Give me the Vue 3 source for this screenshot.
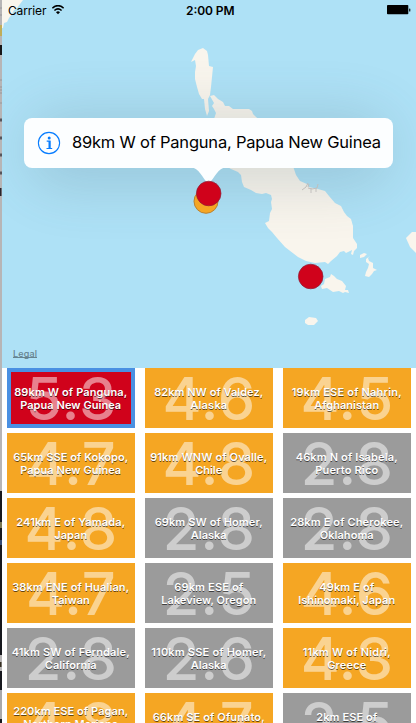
<script setup>
const quakes = [
  { mag: '5.3', lines: ['89km W of Panguna,', 'Papua New Guinea'], level: 'severe', w: [113, 101] },
  { mag: '4.6', lines: ['82km NW of Valdez,', 'Alaska'], level: 'strong', w: [109, 37] },
  { mag: '4.5', lines: ['19km ESE of Nahrin,', 'Afghanistan'], level: 'strong', w: [110, 65] },
  { mag: '4.7', lines: ['65km SSE of Kokopo,', 'Papua New Guinea'], level: 'strong', w: [115, 101] },
  { mag: '4.8', lines: ['91km WNW of Ovalle,', 'Chile'], level: 'strong', w: [117, 27] },
  { mag: '2.8', lines: ['46km N of Isabela,', 'Puerto Rico'], level: 'minor', w: [102, 63] },
  { mag: '4.8', lines: ['241km E of Yamada,', 'Japan'], level: 'strong', w: [109, 33] },
  { mag: '2.8', lines: ['69km SW of Homer,', 'Alaska'], level: 'minor', w: [108, 36] },
  { mag: '2.8', lines: ['28km E of Cherokee,', 'Oklahoma'], level: 'minor', w: [113, 54] },
  { mag: '4.7', lines: ['38km ENE of Hualian,', 'Taiwan'], level: 'strong', w: [117, 38] },
  { mag: '2.5', lines: ['69km ESE of', 'Lakeview, Oregon'], level: 'minor', w: [69, 95] },
  { mag: '4.6', lines: ['49km E of', 'Ishinomaki, Japan'], level: 'strong', w: [55, 97] },
  { mag: '2.8', lines: ['41km SW of Ferndale,', 'California'], level: 'minor', w: [118, 52] },
  { mag: '2.6', lines: ['110km SSE of Homer,', 'Alaska'], level: 'minor', w: [115, 36] },
  { mag: '4.3', lines: ['11km W of Nidri,', 'Greece'], level: 'strong', w: [88, 39] },
  { mag: '4.8', lines: ['220km ESE of Pagan,', 'Northern Mariana', 'Islands'], level: 'strong', w: [115, 95, 40] },
  { mag: '4.7', lines: ['66km SE of Ofunato,', 'Japan'], level: 'strong', w: [112, 33] },
  { mag: '2.5', lines: ['2km ESE of', 'Cloverdale, California'], level: 'minor', w: [61, 118] },
]
</script>

<template>
  <div class="screen">
    <svg class="edge" viewBox="0 0 2 723" aria-hidden="true">
      <rect width="2" height="723" fill="#b7b5b6" />
      <rect y="25" width="2" height="11" fill="#c0ac58" />
      <rect y="45" width="2" height="10" fill="#171719" />
      <path d="M0 8h2M0 15h2M0 80h2M0 87h2M0 90h2M0 93h2M0 103h2" stroke="#98979a" />
      <path d="M0 120h2M0 138h2M0 155h2M0 173h2" stroke="#57545a" stroke-width="3" />
      <rect y="188" width="1.5" height="8" fill="#29252d" />
      <rect y="491" width="2" height="232" fill="#17181e" />
      <rect y="522" width="2" height="6" fill="#777653" />
      <rect y="540" width="2" height="5" fill="#344b75" />
      <rect y="655" width="2" height="16" fill="#b7b5b6" />
      <rect y="662" width="1.5" height="5" fill="#373022" />
      <rect y="690" width="2" height="29" fill="#a9a9ab" />
    </svg>
    <main class="phone">
      <section class="map">
        <svg class="terrain" viewBox="2 0 414 368" aria-hidden="true">
          <g fill="#f9f5ed">
            <path d="M2 0H23L20 4 17 8 14 10 12 14 9 18 7 22 4 23 3 28H2Z" />
            <path d="M191 62L195 54 198 50 203 48 207 51 208 55 209 66 213 67 212 77 211 87 210 95 208 99 209 111 207 116 205 109 204 99 202 99 199 94 197 87 195 79 195 72 196 66 195 60Z" />
            <path d="M210 96L214 95 218 99 223 102 225 106 229 106 233 109 249 109 252 111 253 114 256 117 269 127 278 140 287 153 294 169 296 175 300 181 307 184 309 187 318 189 325 191 329 196 335 203 341 206 344 212 347 216 351 219 353 226 353 238 357 244 357 248 354 251 353 255 351 254 352 250 346 253 344 251 340 252 337 256 331 261 328 264 325 262 315 263 306 261 298 257 285 247 277 238 272 232 268 228 265 223 269 221 270 213 272 209 271 202 272 199 271 195 266 193 262 194 256 193 251 190 244 187 242 182 241 175 238 172 231 169 222 164 215 155 210 142 210 130 214 119 216 113 214 109 212 106 214 103Z" />
            <path d="M331 274L334 276 337 279 342 281 346 286 345 290 348 290 349 293 345 292 343 293 339 291 333 292 327 288 322 289 321 286 324 284 325 279 330 277Z" />
            <path d="M305 320L309 317 316 318 318 321 314 325 308 325 305 323Z" />
            <path d="M360 255L364 253 367 254 364 257 360 258Z" />
            <path d="M370 256L366 259 366 262 369 264 368 268 366 272 365 276 369 277 372 274 374 271 377 270 373 268 373 263 369 261 368 258Z" />
            <path d="M416 232L412 232 406 238 410 247 416 253Z" />
          </g>
          <g fill="none" stroke="#cec9c5" stroke-width="1">
            <path d="M302 190L306 187 308 183M308 188L312 189 317 188 318 184M311 188V193M316 188V192M308 187L309 184" />
          </g>
        </svg>

        <header class="status">
          <span class="carrier"><svg width="40" height="16"><text x="0" y="12" textLength="38.5" lengthAdjust="spacing">Carrier</text></svg>
            <svg class="wifi" width="12" height="10" viewBox="0 0 12 10">
              <path d="M.3 3.200Q6-1.900 11.700 3.200M2.400 5.500Q6 2.200 9.600 5.500" fill="none" stroke="#000" stroke-width="1.600" />
              <path d="M4 7.200Q6 5.400 8 7.200L6 9.300Z" />
            </svg>
          </span>
          <svg class="battery" width="24" height="11" viewBox="0 0 24 11">
            <rect x="0" y="0" width="21.300" height="9.300" rx=".8" />
            <rect x="22.200" y="3.500" width="1.100" height="3" rx=".5" />
          </svg>
          <span class="time"><svg width="50" height="16"><text x="0" y="12" textLength="48.5" lengthAdjust="spacing">2:00 PM</text></svg></span>
        </header>

        <div class="halo"></div>
        <svg class="pins" viewBox="2 0 414 368">
          <circle cx="206" cy="201.300" r="12" fill="#f5a623" stroke="#b98131" />
          <path d="M190 167C200 168 202 178 208.500 184C215 178 217 168 227 167Z" fill="#fcfeff" />
          <circle cx="208.700" cy="193.500" r="12.300" fill="#d0021b" stroke="#8d1f38" stroke-width=".7" />
          <circle cx="310.700" cy="276.500" r="12.300" fill="#d0021b" stroke="#8d1f38" stroke-width=".7" />
        </svg>
        <div class="callout">
          <svg class="info" width="24" height="24" viewBox="0 0 24 24">
            <circle cx="12" cy="12" r="10.600" fill="none" stroke="#087dff" stroke-width="1.100" />
            <circle cx="12.200" cy="6.900" r="1.500" fill="#087dff" />
            <path d="M9.700 10.200H13V17.200M9.500 17.500H15.200" fill="none" stroke="#087dff" stroke-width="1.200" />
            <path d="M12.400 10V17.300" stroke="#087dff" stroke-width="1.800" />
          </svg>
          <svg class="title" width="312" height="26"><text x="0" y="18" textLength="309" lengthAdjust="spacing">89km W of Panguna, Papua New Guinea</text></svg>
        </div>
        <svg class="legal" width="28" height="13"><text x="0" y="9" textLength="24" lengthAdjust="spacing">Legal</text><path d="M0 9.500H24" stroke="#66838f" /></svg>
      </section>

      <section class="grid">
        <article v-for="(q, i) in quakes" :key="i" class="cell" :class="[q.level, { selected: i === 0 }]">
          <svg class="mag" width="128" height="60"><text x="64.3" y="51.500" text-anchor="middle">{{ q.mag }}</text></svg>
          <div class="place">
            <svg v-for="(line, n) in q.lines" :key="n" class="line" width="128" height="13">
              <text :x="63.7 - q.w[n] / 2" y="10.500" :textLength="q.w[n]" lengthAdjust="spacing">{{ line }}</text>
            </svg>
          </div>
        </article>
      </section>
    </main>
  </div>
</template>

<style>
body { margin: 0; overflow: hidden; }
</style>

<style scoped>
.screen { display: flex; width: 416px; height: 723px; overflow: hidden; background: #fff; font-family: Inter, "Liberation Sans", sans-serif; }
.screen svg { display: block; flex: none; }
.edge { width: 2px; height: 723px; }
.phone { width: 414px; height: 723px; overflow: hidden; }
.map { position: relative; height: 368px; background: #aee1f6; overflow: hidden; }
.terrain, .pins { position: absolute; inset: 0; width: 414px; height: 368px; }
.status { position: relative; display: flex; justify-content: space-between; box-sizing: border-box; height: 20px; padding: 3px 5px 0 6px; font-size: 12px; }
.carrier { display: flex; gap: 4px; }
.wifi { margin-top: 2px; }
.battery { margin-top: 2px; }
.time { position: absolute; left: 184px; top: 3px; font-weight: 600; }
.time text { font-size: 12px; }
.halo { position: absolute; left: 42px; top: 128px; width: 330px; height: 38px; border-radius: 20px; box-shadow: 0 3px 54px 18px rgba(70, 95, 105, .19); }
.callout { position: absolute; left: 22px; top: 118px; display: flex; align-items: center; box-sizing: border-box; width: 369px; height: 50px; padding-left: 13px; gap: 10.500px; border-radius: 8px; background: #fcfeff; }
.title text { font-size: 16.500px; }
.legal { position: absolute; left: 11px; top: 348px; }
.legal text { font-size: 9px; fill: #66838f; font-weight: 500; }
.grid { display: grid; grid-template-columns: repeat(3, 128px); grid-auto-rows: 60px; gap: 5px 10px; padding-left: 5px; }
.cell { display: grid; place-items: center; width: 128px; height: 60px; }
.cell > * { grid-area: 1 / 1; }
.severe { background: #d0021b; }
.strong { background: #f5a623; }
.minor { background: #9b9b9b; }
.selected { box-shadow: inset 0 0 0 4px #4a90e2; }
.mag text { font-size: 59.500px; font-weight: 500; letter-spacing: .8px; fill: rgba(255, 255, 255, .5); }
.line { overflow: visible; }
.line text { font-size: 11px; font-weight: 600; fill: #fff; text-shadow: 0 1px 0 rgba(0, 0, 0, .6); }
</style>
